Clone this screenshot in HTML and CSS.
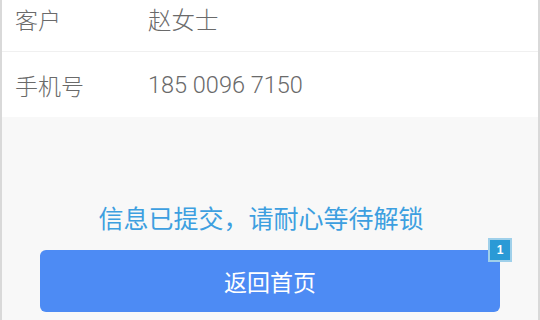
FILE: index.html
```html
<!DOCTYPE html>
<html lang="zh-CN">
<head>
    <meta charset="UTF-8">
    <title>解锁申请</title>
    <link rel="stylesheet" href="styles.css">
</head>
<body>
    <div class="page">
        <div class="info-list">
            <div class="info-row">
                <span class="label">客户</span>
                <span class="value">赵女士</span>
            </div>
            <div class="info-row">
                <span class="label">手机号</span>
                <span class="value">185 0096 7150</span>
            </div>
        </div>

        <div class="result">
            <p class="tip">信息已提交，请耐心等待解锁</p>
            <a class="btn-home" href="#">
                返回首页
                <span class="badge">1</span>
            </a>
        </div>
    </div>
</body>
</html>
```

FILE: styles.css
```css
body {
    margin: 0;
    font-family: Roboto, "Noto Sans CJK SC", sans-serif;
    background: #f8f8f8;
    overflow: hidden;
}

.page {
    height: 320px;
    border-left: 2px solid #d9d9d9;
    border-right: 2px solid #d9d9d9;
    background: #f8f8f8;
    overflow: hidden;
}

.info-list {
    background: #fff;
    margin-top: -14px;
}

.info-row {
    display: flex;
    align-items: center;
    height: 65px;
    padding-left: 13px;
    font-size: 23px;
    font-weight: 300;
    color: #6a6a6a;
}

.info-row + .info-row {
    border-top: 1px solid #f0f0f0;
}

.label {
    width: 133px;
}

.value {
    font-size: 23.5px;
}

.result {
    padding-top: 88px;
}

.tip {
    margin: 0;
    padding-right: 18px;
    text-align: center;
    font-size: 25px;
    line-height: 30px;
    color: #3d9fe0;
}

.btn-home {
    position: relative;
    display: flex;
    justify-content: center;
    align-items: center;
    height: 62px;
    margin: 15px 38px 0 38px;
    border-radius: 6px;
    background: #4d8bf4;
    color: #fff;
    font-size: 23px;
    text-decoration: none;
}

.badge {
    position: absolute;
    top: -12px;
    right: -12px;
    width: 20px;
    height: 20px;
    border: 2px solid #9fd0ea;
    background: #2a9ad6;
    color: #fff;
    font-size: 12px;
    font-weight: bold;
    font-family: "Liberation Sans", sans-serif;
    line-height: 20px;
    text-align: center;
}
```
